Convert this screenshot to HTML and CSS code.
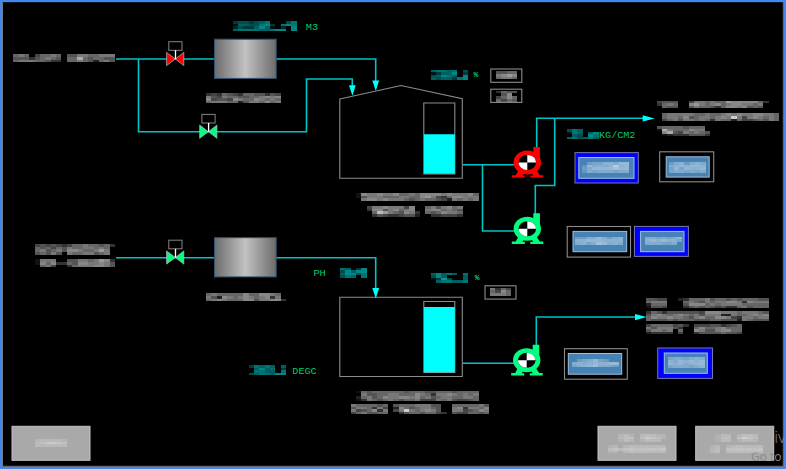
FILE: index.html
```html
<!DOCTYPE html>
<html lang="en">
<head>
<meta charset="utf-8">
<title>Tank overview</title>
<link rel="stylesheet" href="styles.css">
</head>
<body>
<svg class="mimic" width="786" height="469" viewBox="0 0 786 469">
  <defs>
    <linearGradient id="metal">
      <stop offset="0" stop-color="#6c6c6c"/>
      <stop offset=".5" stop-color="#c2c2c2"/>
      <stop offset="1" stop-color="#6c6c6c"/>
    </linearGradient>
    <g id="valve">
      <rect class="actuator" x="-6.5" y="-17.3" width="13.2" height="8.6"/>
      <path class="body" d="M-8.7-6.6V6.6L0 0L8.5 6.6V-6.6L0 0Z"/>
      <path class="stem" d="M.2-8.7V0"/>
    </g>
    <g id="pump">
      <path class="casing" d="M6-15.5H12.6V0H6ZM-8 6L-11.5 12.8H-15.5V15.2H-2.5V13H-5L-2 9H3L6 13H3V15.2H16V12.8H12.5L8 6Z"/>
      <ellipse class="casing" rx="13.7" ry="12"/>
      <ellipse class="hub" rx="8.8" ry="7.5"/>
      <path class="quadrant" d="M0 0V-7.5A8.8 7.5 0 0 1 8.8 0ZM0 0V7.5A8.8 7.5 0 0 1-8.8 0Z"/>
    </g>
  </defs>

  <g class="pipes">
    <path d="M116 59H215M276 59H375.7V82M138.5 59V131.7H306.5V79H352.3V87"/>
    <path d="M462.5 164.7H516M482.5 164.7V231H516M536.7 148V118.3H644M554.7 118.3V185.5H535.3V216"/>
    <path d="M116 257.7H215M276 257.7H375.7V290M462.5 363.3H516M536.3 346V317H636"/>
  </g>

  <g class="outline">
    <path d="M339.8 99L401 85.5L462.3 98.8V178.2H339.8Z"/>
    <path d="M339.8 297.2H462.3V376.5H339.8Z"/>
    <path d="M423.8 103H454.8V174H423.8ZM423.8 301.5H454.8V372.5H423.8Z"/>
  </g>
  <path class="level" d="M424 134.3H454.8V173.7H424ZM424 307H454.8V372.3H424Z"/>
  <path class="level" d="M349 85.2H355.7L352.4 95.8ZM372.3 80.5H379.1L375.8 91ZM372.3 288H379.1L375.8 298.5ZM642.7 115.3L654.7 118.4L642.7 121.5ZM635 314L646.7 317.1L635 320.2Z"/>

  <rect class="vessel" x="214.5" y="39.2" width="61.7" height="39.2"/>
  <rect class="vessel" x="214.5" y="237.7" width="61.7" height="39.2"/>

  <use href="#valve" x="175.3" y="59" class="stopped"/>
  <use href="#valve" x="208.4" y="131.7" class="running"/>
  <use href="#valve" x="175.3" y="257.5" class="running"/>
  <use href="#pump" x="527.3" y="162.4" class="stopped"/>
  <use href="#pump" x="527.3" y="228.7" class="running"/>
  <use href="#pump" x="526.7" y="360.3" class="running"/>

  <g class="outline">
    <rect x="490.8" y="69" width="31" height="13.3"/>
    <rect x="490.8" y="89.2" width="31" height="13.2"/>
    <rect x="485" y="285.8" width="31" height="13.3"/>
    <rect x="659.7" y="151.8" width="54" height="30"/>
    <rect x="567.2" y="226.5" width="63.3" height="30.6"/>
    <rect x="564.5" y="348.7" width="62.8" height="30.5"/>
  </g>
  <g class="selected">
    <rect x="575" y="152.6" width="63.3" height="30.4"/>
    <rect x="634.4" y="226.4" width="54" height="30"/>
    <rect x="657.7" y="348" width="54.8" height="30.4"/>
  </g>
  <g class="button">
    <rect x="578.8" y="157.5" width="55.2" height="20.8"/>
    <rect x="666.2" y="156.8" width="43" height="20.3"/>
    <rect x="573" y="231.4" width="53.7" height="20.3"/>
    <rect x="640.6" y="231.4" width="43.4" height="20.3"/>
    <rect x="568.3" y="353.5" width="53.4" height="20.7"/>
    <rect x="664.3" y="353" width="43" height="20.3"/>
  </g>

  <g class="units">
    <text x="305.8" y="29.6" textLength="12.4" lengthAdjust="spacingAndGlyphs">M3</text>
    <text class="percent" x="473.6" y="77.3">%</text>
    <text x="599" y="138.2" textLength="36.4" lengthAdjust="spacingAndGlyphs">KG/CM2</text>
    <text x="313.4" y="276.3" textLength="12.4" lengthAdjust="spacingAndGlyphs">PH</text>
    <text class="percent" x="474.8" y="280">%</text>
    <text x="292.3" y="374" textLength="24.4" lengthAdjust="spacingAndGlyphs">DEGC</text>
  </g>

  <g class="nav">
    <rect x="12" y="426.3" width="78" height="34"/>
    <rect x="598" y="426.3" width="78" height="34"/>
    <rect x="695.7" y="426.3" width="78" height="34"/>
  </g>
  <g class="watermark">
    <text class="large" x="774.2" y="443">iv</text>
    <text class="small" x="751" y="461">Go to</text>
  </g>
  <g id="masks"></g>
  <path class="edge" d="M2.5 466V2.5M2 466.3H784M783.3 2V466"/>
  <rect class="frame" x="1" y="1" width="784" height="467"/>
</svg>
<script src="masks.js"></script>
</body>
</html>
```
FILE: styles.css
```css
body { margin: 0; background: #000; overflow: hidden; }
.mimic { display: block; background: #000; }
.frame { fill: none; stroke: #4288f0; stroke-width: 2.4; }
.edge { fill: none; stroke: #a9a39b; stroke-width: 1; opacity: .75; }
.pipes { fill: none; stroke: #00c4c6; stroke-width: 1.6; }
.outline { fill: none; stroke: #8c8c8c; stroke-width: 1.1; }
.level { fill: #0ff; }
.vessel { fill: url(#metal); stroke: #33536f; stroke-width: 1; }
.stopped { color: #f00; }
.running { color: #00ff80; }
.actuator { fill: #000; stroke: #858585; stroke-width: 1; }
.body { fill: currentColor; stroke: #bbb; stroke-width: .7; }
.stem { stroke: #fff; stroke-width: 1.3; }
.casing { fill: currentColor; }
.hub { fill: #000; }
.quadrant { fill: #fff; }
.selected { fill: #00f; stroke: #7777a8; stroke-width: 1; }
.button { fill: #4682b4; stroke: #9fc0dc; stroke-width: 1; }
.units { fill: #00cc68; font: 9px "Liberation Mono", monospace; }
.percent { font-size: 8px; font-weight: bold; }
.nav { fill: #a9a9a9; stroke: #c4c4c4; stroke-width: 1; }
.watermark { fill: #8a8a8a; font-family: "Open Sans", sans-serif; }
.large { font-size: 17px; font-weight: 300; }
.small { font-size: 12px; }
.gray { fill: #fff; }
.teal { fill: #00f0f0; }
.pale { fill: #e4eefa; }
.light { fill: #fff; }
```
FILE: masks.js
```js
// Obscured labels: x, y, row height, tint, then one hex digit of opacity per cell.
const CELL = 5.333;
const masks = [
  [13.3, 54.3, 2.6, "gray", ["676046676 557766777", "555356765 66a656655", "677766533 667652675"]],
  [206, 93, 2.5, "gray", ["34365436655354", "75476655667878", "84554876687676", "67776625776867"]],
  [206, 293.3, 2.6, "gray", ["676666686688760", "752876787678370", "678766688577883"]],
  [35, 244, 2.65, "gray", ["454543466766563", "656465766776760", "675675887667970", "565750766775670"]],
  [35, 259.3, 2.65, "gray", ["177700557767983", "186833658877875", "067400367778875"]],
  [356, 193, 2.65, "gray", ["18778778667688887877786", "15777666776689743688777", "07887877765676654276767"]],
  [366.7, 206, 2.65, "gray", ["4778777480 6757867", "3885786780 7886765", "06b9765873 6568776", "035433455200334443"]],
  [356, 390.7, 2.6, "gray", ["16566666656665566656666", "07556677666876377876767", "26756877887867567766776", "13765676566744476754456"]],
  [350.7, 404, 2.6, "gray", ["7666656 5666777550 6666675", "5776374 2865677650 7837768", "7456837 47c7678750 7745687", "4675566 0356656643 5446656"]],
  [656.6, 100.6, 2.6, "gray", ["455500477676698888863", "367600897678678877670", "065500576653688785650"]],
  [656.6, 113.4, 2.6, "gray", ["06777776676678787788776", "06776856776787c74787676", "04675776763766264456576"]],
  [656.6, 126, 2.6, "gray", ["5666656660", "1a76668770", "08a5476765", "0123335553"]],
  [646, 298, 2.6, "gray", ["55440023666756656566655", "67770006765767788738777", "26660005888676777766666", "15540003565654533675666"]],
  [646, 311, 2.6, "gray", ["36535555554888777677765", "57876787675777227667878", "68778776578668874377677", "65556566655566555276555"]],
  [646, 324, 2.6, "gray", ["466664530444553456", "757775300686678666", "577670600875578866", "233330400355556554"]],
  [232.8, 21, 2.5, "teal", ["344345600046", "155446730676", "243357510207", "566665567707"]],
  [430.8, 69.6, 2.5, "teal", ["5665604", "1355703", "4576507", "5455367"]],
  [566.7, 129, 2.5, "teal", ["465000", "165057", "054076", "564565"]],
  [340, 267.5, 2.5, "teal", ["65037", "47577", "57746", "46506"]],
  [430.8, 272.8, 2.5, "teal", ["5756506", "4750005", "1384005", "0566556"]],
  [248.8, 365, 2.5, "teal", ["3656505", "0575603", "0665506", "4566577"]],
  [496, 71, 2.8, "gray", ["5566", "7898", "6776"]],
  [496, 90.5, 2.8, "gray", ["3655", "0580", "4686", "6465"]],
  [490, 287.5, 2.7, "gray", ["7364", "6486", "7776"]],
  [581.5, 162, 2.7, "pale", ["045577688", "386767b78", "468888988", "365666566"]],
  [668.5, 162, 2.7, "pale", ["4674676", "6787887", "5858778", "5665656"]],
  [575, 236.5, 2.7, "pale", ["446686467", "778887777", "675698676"]],
  [645, 236.5, 2.7, "pale", ["6656568", "7878775", "6665560"]],
  [571.5, 359.3, 2.7, "pale", ["045685400", "676787788", "567896654"]],
  [667.5, 357.3, 2.7, "pale", ["5665676", "7687878", "8786788", "5666567"]],
  [35, 439.2, 2.6, "light", ["455554", "579a87", "555555"]],
  [613, 434.2, 2.6, "light", ["0463056543", "057706a864", "0364036550"]],
  [607.5, 445.3, 2.6, "light", ["34046555555", "68578777878", "33046556555"]],
  [710, 434.2, 2.6, "light", ["025504665", "036607b86", "025503554"]],
  [704.5, 445.3, 2.6, "light", ["03504565555", "14607787878", "14605666666"]]
];
const layer = document.getElementById("masks");
const scale = { gray: 1, teal: 1.2, pale: 0.95, light: 0.6 };
for (const [x, y, rowHeight, tint, rows] of masks) {
  rows.forEach((row, r) => [...row].forEach((digit, c) => {
    const level = parseInt(digit, 16);
    if (!level) return;
    const cell = document.createElementNS("http://www.w3.org/2000/svg", "rect");
    cell.setAttribute("class", tint);
    cell.setAttribute("x", x + c * CELL);
    cell.setAttribute("y", y + r * rowHeight);
    cell.setAttribute("width", CELL);
    cell.setAttribute("height", rowHeight);
    cell.setAttribute("fill-opacity", (level / 15 * scale[tint]).toFixed(2));
    cell.setAttribute("shape-rendering", "crispEdges");
    layer.append(cell);
  }));
}
```
